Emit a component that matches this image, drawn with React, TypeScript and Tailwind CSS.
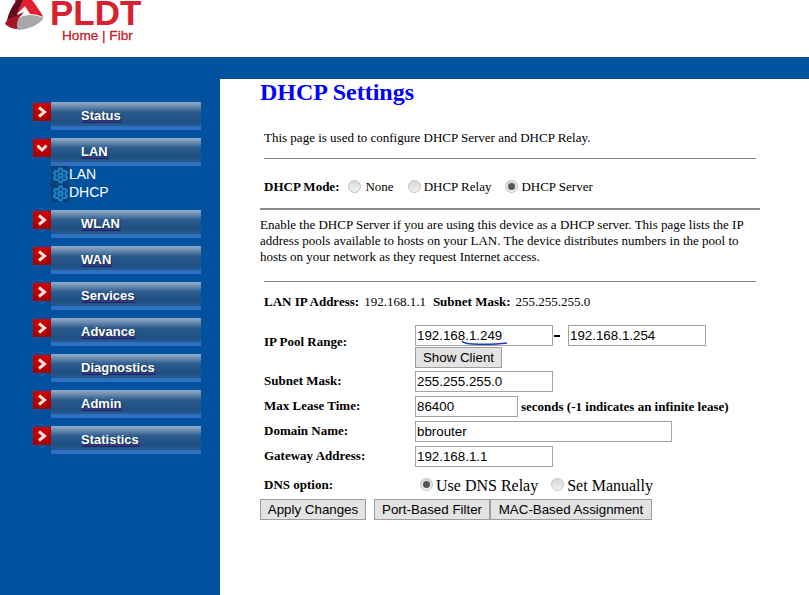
import type { ReactNode } from "react";
import { Settings } from "lucide-react";

const navRest = ["WLAN", "WAN", "Services", "Advance", "Diagnostics", "Admin", "Statistics"];

function NavItem({ label, open }: { label: string; open?: boolean }) {
  return (
    <div className="flex h-[28px] pl-[33px]">
      <div className="mt-[1px] flex h-[18px] w-[18px] items-center justify-center bg-gradient-to-b from-[#d00000] to-[#a80000]">
        <svg width="12" height="12" viewBox="0 0 12 12" fill="none" stroke="#f0dcdc" strokeWidth="3">
          {open ? <path d="M1.5 3.5 6 8l4.5-4.5" /> : <path d="M3 1.5 8.5 6 3 10.5" />}
        </svg>
      </div>
      <div className="flex h-[28px] w-[150px] items-center bg-[linear-gradient(#93abc9_0%,#6f8fb3_14%,#2a5a8e_36%,#20507f_70%,#235a96_84%,#2f70c0_88%,#2f70c0_100%)] pl-[30px]">
        <a className="text-[13px] font-bold text-white underline decoration-[#4b2b9a] [text-shadow:1px_1px_1px_#1a2b50]">
          {label}
        </a>
      </div>
    </div>
  );
}

function SubItem({ label }: { label: string }) {
  return (
    <div className="flex h-[18px] items-center pl-[51px] text-[14px] text-white">
      <span className="flex h-[18px] w-[18px] items-center justify-center bg-[#0d3f78]">
        <Settings size={17} strokeWidth={3} className="text-[#1a86c8]" />
      </span>
      <span className="-translate-y-[1px]">{label}</span>
    </div>
  );
}

function TextBox({ value, className }: { value: string; className: string }) {
  return (
    <input
      readOnly
      value={value}
      className={`h-[21px] border border-[#a3a3a3] px-[1px] font-['Liberation_Sans',sans-serif] text-[13.33px] text-black outline-none ${className}`}
    />
  );
}

function Btn({ label, className }: { label: string; className: string }) {
  return (
    <button
      type="button"
      className={`h-[21px] border border-[#9e9e9e] bg-[#e3e3e3] font-['Liberation_Sans',sans-serif] text-[13.33px] leading-none text-black ${className}`}
    >
      {label}
    </button>
  );
}

function Radio({ checked, className }: { checked?: boolean; className: string }) {
  return (
    <span
      className={`flex h-[13px] w-[13px] -translate-y-[1px] items-center justify-center rounded-full border border-[#c2c2c2] bg-gradient-to-b from-[#d8d8d8] to-[#f2f2f2] ${className}`}
    >
      {checked ? <span className="h-[7px] w-[7px] rounded-full bg-[#555555]" /> : null}
    </span>
  );
}

function Row({ label, children, className }: { label: string; children: ReactNode; className: string }) {
  return (
    <div className={`flex items-center ${className}`}>
      <b className="w-[151px] shrink-0 -translate-y-[1px]">{label}</b>
      {children}
    </div>
  );
}

export default function App() {
  return (
    <div className="flex h-[595px] w-[809px] flex-col overflow-hidden bg-white font-['Liberation_Serif',serif] text-[13px] text-black">
      <header className="flex h-[57px] shrink-0 pl-[5px]">
        <svg width="39" height="31" viewBox="0 0 39 31">
          <path d="M10 0 H27 C31 5 35 11 38.5 17 C34 15 29 14 25 14 L20 6 L13 13 Z" fill="#e2202f" />
          <path d="M2 20 C4 12 7 6 12 0 L18 0 C15 5 13 10 12 16 Z" fill="#5c0c1c" />
          <path d="M0 24 C1 22 2 20 2 20 L12 15 L19 12 L14 18 C12 22 12 26 13 29 C8 29 3 27 0 24Z" fill="#a51525" />
          <path d="M14 18 C20 14 30 14 38.5 18 C34 25 25 29 13 30 C12 26 12 22 14 18Z" fill="#a8a8a8" />
        </svg>
        <div className="ml-[6px] flex flex-col">
          <div className="h-[25px] font-['Liberation_Sans',sans-serif] text-[35px] leading-[25px] font-bold text-[#d9202e]">
            PLDT
          </div>
          <div className="mt-[4px] ml-[12px] font-['Liberation_Sans',sans-serif] text-[13.6px] leading-[14px] font-medium text-[#c8202e] [-webkit-text-stroke:0.3px_#c8202e]">
            Home | Fibr
          </div>
        </div>
      </header>
      <div className="h-[22px] shrink-0 bg-[#00529f]" />
      <div className="flex min-h-0 flex-1">
        <nav className="flex w-[220px] shrink-0 flex-col gap-2 bg-[#00529f] pt-[23px] font-['Liberation_Sans',sans-serif]">
          <NavItem label="Status" />
          <div>
            <NavItem label="LAN" open />
            <SubItem label="LAN" />
            <SubItem label="DHCP" />
          </div>
          {navRest.map((n) => (
            <NavItem key={n} label={n} />
          ))}
        </nav>
        <main className="flex-1 pl-[40px]">
          <h1 className="h-[27px] text-[24px] leading-[27px] font-bold text-[#0000ff]">DHCP Settings</h1>
          <p className="mt-[25px] pl-[4px] leading-[14px]">This page is used to configure DHCP Server and DHCP Relay.</p>
          <div className="mt-[13px] ml-[4px] h-px w-[492px] bg-[#888888]" />
          <div className="mt-[20px] flex h-[16px] items-center pl-[4px]">
            <b>DHCP Mode:</b>
            <Radio className="ml-[9px]" />
            <span className="ml-[4px]">None</span>
            <Radio className="ml-[14px]" />
            <span className="ml-[3px]">DHCP Relay</span>
            <Radio checked className="ml-[14px]" />
            <span className="ml-[3px]">DHCP Server</span>
          </div>
          <div className="mt-[13px] h-[2px] w-[500px] bg-[#888888]" />
          <p className="mt-[7px] w-[495px] leading-[16px]">
            Enable the DHCP Server if you are using this device as a DHCP server. This page lists the IP address pools
            available to hosts on your LAN. The device distributes numbers in the pool to hosts on your network as they
            request Internet access.
          </p>
          <div className="mt-[16px] ml-[4px] h-px w-[492px] bg-[#888888]" />
          <div className="mt-[13px] flex h-[14px] items-center pl-[4px] leading-[14px]">
            <b>LAN IP Address:</b>
            <span className="ml-[5px]">192.168.1.1</span>
            <b className="ml-[7px]">Subnet Mask:</b>
            <span className="ml-[5px]">255.255.255.0</span>
          </div>
          <div className="mt-[16px] flex pl-[4px]">
            <b className="mt-[7px] w-[151px] shrink-0">IP Pool Range:</b>
            <div className="flex flex-col">
              <div className="relative flex items-center">
                <TextBox value="192.168.1.249" className="w-[138px]" />
                <span className="ml-[1px] h-[2px] w-[6px] bg-black" />
                <TextBox value="192.168.1.254" className="ml-[8px] w-[138px]" />
                <svg width="48" height="6" viewBox="0 0 48 6" fill="none" className="absolute top-[15px] left-[46px]">
                  <path d="M1 1 C3 3 6 4 12 4 C26 4.5 38 4 46 3" stroke="#1a3fb0" strokeWidth="1.4" />
                </svg>
              </div>
              <Btn label="Show Client" className="mt-[1px] w-[87px]" />
            </div>
          </div>
          <Row label="Subnet Mask:" className="mt-[3px] pl-[4px]">
            <TextBox value="255.255.255.0" className="w-[138px]" />
          </Row>
          <Row label="Max Lease Time:" className="mt-[4px] pl-[4px]">
            <TextBox value="86400" className="w-[103px]" />
            <b className="ml-[3px]">seconds (-1 indicates an infinite lease)</b>
          </Row>
          <Row label="Domain Name:" className="mt-[4px] pl-[4px]">
            <TextBox value="bbrouter" className="w-[257px]" />
          </Row>
          <Row label="Gateway Address:" className="mt-[4px] pl-[4px]">
            <TextBox value="192.168.1.1" className="w-[138px]" />
          </Row>
          <div className="mt-[8px] flex h-[20px] items-center pl-[4px]">
            <b className="w-[156px] shrink-0">DNS option:</b>
            <Radio checked className="" />
            <span className="ml-[3px] translate-y-[1px] text-[16px]">Use DNS Relay</span>
            <Radio className="ml-[13px]" />
            <span className="ml-[3px] translate-y-[1px] text-[16px]">Set Manually</span>
          </div>
          <div className="mt-[4px] flex">
            <Btn label="Apply Changes" className="w-[106px]" />
            <Btn label="Port-Based Filter" className="ml-[8px] w-[116px]" />
            <Btn label="MAC-Based Assignment" className="w-[162px]" />
          </div>
        </main>
      </div>
    </div>
  );
}
